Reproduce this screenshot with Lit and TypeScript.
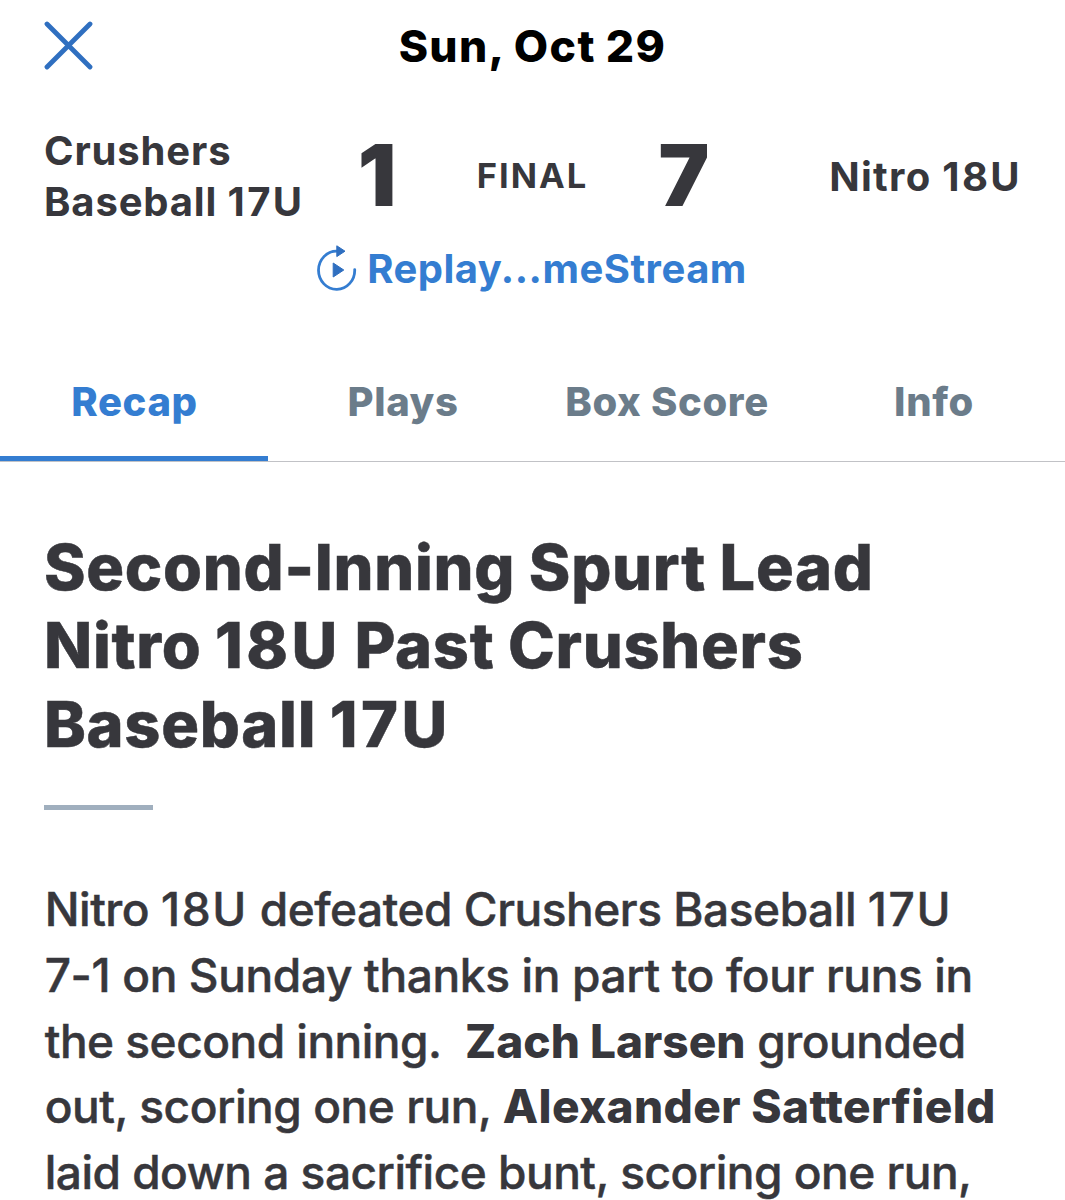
import { LitElement, html, css } from "lit";
import { customElement } from "lit/decorators.js";

@customElement("app-root")
class AppRoot extends LitElement {
  static styles = css`
    :host { display: block; height: 1200px; overflow: hidden; background: #fff; color: #37373c; font-family: Inter, "Liberation Sans", sans-serif; }
    * { box-sizing: border-box; }
    .bar { display: grid; grid-template-columns: 1fr auto 1fr; align-items: center; height: 92px; padding: 0 44px; }
    .close { display: block; width: 49px; height: 49px; margin-top: -2px; }
    .date { color: #000; font-size: 44.5px; line-height: 52px; font-weight: 800; letter-spacing: 1.35px; word-spacing: -1px; white-space: nowrap; }
    .score { display: grid; grid-template-columns: 287px 92px 215px 92px 1fr; height: 152px; align-items: center; padding: 16px 44px 0; }
    .team { font-size: 40px; line-height: 51px; font-weight: 700; letter-spacing: 0.85px; white-space: nowrap; }
    .team .n { letter-spacing: 2.4px; }
    .home { text-align: right; letter-spacing: 1.3px; margin-right: -1px; }
    .num { font-size: 85.5px; line-height: 100px; font-weight: 900; text-align: center; padding-bottom: 2px; }
    .final { font-size: 34.5px; line-height: 40px; font-weight: 700; letter-spacing: 2px; text-align: center; padding-left: 4px; }
    .replay { display: flex; height: 50px; justify-content: center; align-items: center; color: #347dd1; font-size: 40px; line-height: 50px; font-weight: 700; letter-spacing: 0.5px; gap: 11px; padding-right: 4px; }
    .play { display: block; width: 42px; height: 48px; overflow: visible; }
    .tabs { display: grid; grid-template-columns: 269px 267px 261px 268px; height: 168px; padding-top: 54px; border-bottom: 1px solid #c1c2c6; color: #6b7c8a; font-size: 40px; font-weight: 800; letter-spacing: 0.65px; line-height: 108px; }
    .tab { height: 113px; text-align: center; padding-left: 1px; }
    .tab:last-child { padding-left: 6px; }
    .active { color: #347dd1; border-bottom: 5px solid #347dd1; margin-right: 1px; }
    h1 { font-size: 63px; line-height: 78.3px; font-weight: 800; margin: 66px 0 0 44px; white-space: nowrap; letter-spacing: 0.72px; word-spacing: -1px; -webkit-text-stroke: 0.5px; }
    h1 .n { letter-spacing: 3.5px; }
    .rule { width: 109px; height: 5px; margin: 42px 0 0 44px; background: #a0afbe; }
    p { font-size: 46px; line-height: 65.6px; margin: 67.5px 0 0 44.7px; font-weight: 500; letter-spacing: -0.45px; white-space: nowrap; -webkit-text-stroke: 0.5px; }
    p .n { letter-spacing: 1.6px; }
    b { font-weight: 800; letter-spacing: 0.35px; -webkit-text-stroke: 0; }
    .line { display: block; }
    .loose { letter-spacing: -0.35px; }
    .tight { letter-spacing: -0.5px; }
    .snug { letter-spacing: 0; }
  `;
  render() {
    return html`
      <header class="bar">
        <svg class="close" viewBox="0 0 49 49" fill="none" stroke="#2f6fc0" stroke-width="4.8" stroke-linecap="round"><path d="M3 3 46 46M46 3 3 46" /></svg>
        <span class="date">Sun, Oct 29</span>
      </header>
      <section class="score">
        <div class="team">Crushers<br />Baseball <span class="n">17U</span></div>
        <div class="num">1</div>
        <div class="final">FINAL</div>
        <div class="num">7</div>
        <div class="team home">Nitro <span class="n">18U</span></div>
      </section>
      <div class="replay">
        <svg class="play" viewBox="0 0 42 48" fill="none"><path d="M23 6.2A18.1 19.1 0 1 0 40.7 24.6" stroke="#347dd1" stroke-width="2.8" stroke-linecap="round" /><path d="M22.8.8v10.8l8.2-5.4zM19.2 18v14l10.6-7z" fill="#2f6fc0" stroke="#2f6fc0" stroke-width="1" stroke-linejoin="round" /></svg>
        <span>Replay...meStream</span>
      </div>
      <nav class="tabs">
        <span class="tab active">Recap</span><span class="tab">Plays</span><span class="tab">Box Score</span><span class="tab">Info</span>
      </nav>
      <h1><span class="line">Second-Inning Spurt Lead</span><span class="line">Nitro <span class="n">18U</span> Past Crushers</span><span class="line">Baseball <span class="n">17U</span></span></h1>
      <div class="rule"></div>
      <p>
        <span class="line">Nitro <span class="n">18U</span> defeated Crushers Baseball <span class="n">17U</span></span>
        <span class="line loose">7-1 on Sunday thanks in part to four runs in</span>
        <span class="line tight">the second inning.&nbsp; <b class="snug">Zach Larsen</b> grounded</span>
        <span class="line">out, scoring one run, <b>Alexander Satterfield</b></span>
        <span class="line tight">laid down a sacrifice bunt, scoring one run,</span>
      </p>
    `;
  }
}
